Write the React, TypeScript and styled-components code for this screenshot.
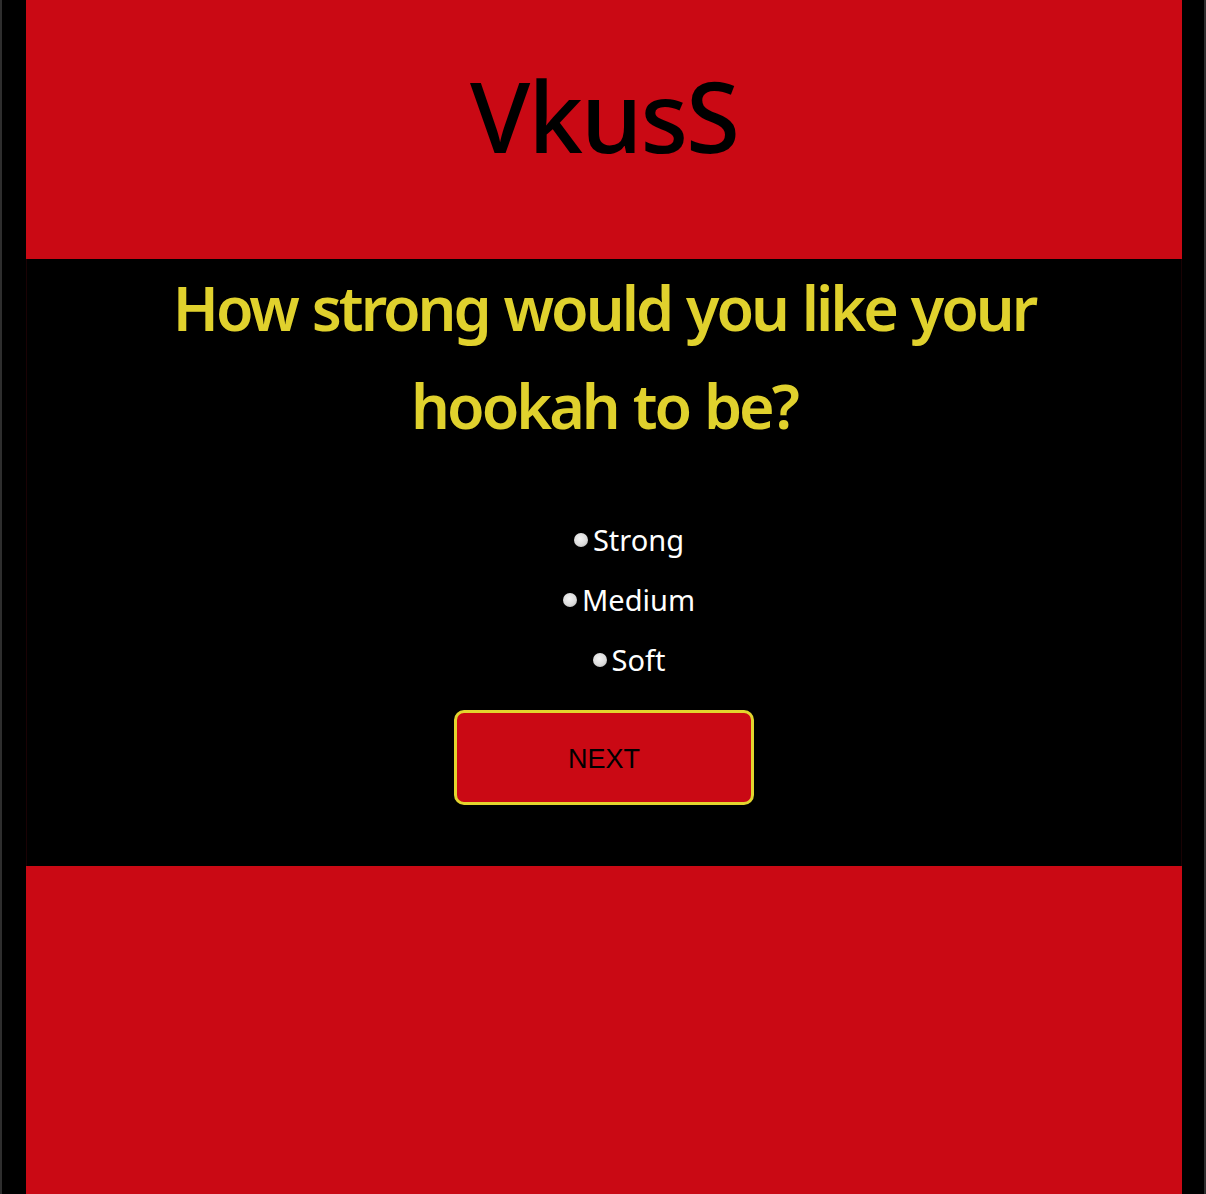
import React from "react";
import styled, { createGlobalStyle } from "styled-components";

const Global = createGlobalStyle`
  html, body { margin: 0; padding: 0; background: #000; }
  body { font-family: "Noto Sans", "Open Sans", sans-serif; }
`;

const Page = styled.div`
  min-height: 1194px;
  box-sizing: border-box;
  border-left: 2px solid #2e2e2e;
  border-right: 2px solid #2e2e2e;
  padding: 0 22px 0 24px;
  background: #000;
  display: flex;
  flex-direction: column;
`;

const Header = styled.header`
  height: 259px;
  background: #ca0914;
  display: flex;
  align-items: center;
  justify-content: center;
`;

const Logo = styled.h1`
  margin: 0;
  font-size: 98px;
  font-weight: 500;
  letter-spacing: -2px;
  color: #000;
  line-height: 1;
  transform: translateY(-15px);
`;

const Main = styled.main`
  background: #000;
  border-left: 1px solid #1a0204;
  border-right: 1px solid #1a0204;
  padding: 0 0 61px;
  display: flex;
  flex-direction: column;
  align-items: center;
`;

const Question = styled.h2`
  margin: 0;
  max-width: 900px;
  text-align: center;
  color: #e0d12d;
  font-size: 61px;
  font-weight: 600;
  letter-spacing: -3px;
  word-spacing: 2px;
  line-height: 98px;
`;

const Options = styled.div`
  margin-top: 54px;
  padding-left: 50px;
  display: flex;
  flex-direction: column;
  align-items: center;
`;

const Option = styled.label`
  height: 60px;
  display: flex;
  align-items: center;
  color: #fff;
  font-size: 29px;
  cursor: pointer;
`;

const Radio = styled.input`
  appearance: none;
  margin: 2px 5px 0 0;
  width: 14px;
  height: 14px;
  border-radius: 50%;
  background: radial-gradient(circle at 45% 40%, #f4f4f4 0%, #dcdcdc 55%, #a8a8a8 100%);
  border: none;
`;

const NextButton = styled.button`
  margin-top: 21px;
  width: 300px;
  height: 95px;
  box-sizing: border-box;
  padding-top: 4px;
  background: #ca0914;
  border: 3px solid #e3d42e;
  border-radius: 10px;
  color: #000;
  font-family: "Liberation Sans", Arial, sans-serif;
  font-size: 27px;
  cursor: pointer;
`;

const Footer = styled.footer`
  flex: 1;
  background: #ca0914;
`;

export default function App() {
  const opts = ["Strong", "Medium", "Soft"];
  return (
    <>
      <Global />
      <Page>
        <Header>
          <Logo>VkusS</Logo>
        </Header>
        <Main>
          <Question>How strong would you like your hookah to be?</Question>
          <Options>
            {opts.map((o) => (
              <Option key={o}>
                <Radio type="radio" name="strength" value={o} />
                {o}
              </Option>
            ))}
          </Options>
          <NextButton>NEXT</NextButton>
        </Main>
        <Footer />
      </Page>
    </>
  );
}
